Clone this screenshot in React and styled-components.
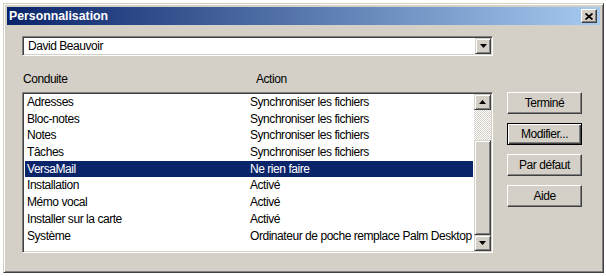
import React from "react";
import styled, { createGlobalStyle } from "styled-components";

const face = "#d4d0c8";

const GlobalStyle = createGlobalStyle`
  html, body {
    margin: 0;
    padding: 0;
    background: #fff;
  }
  body {
    font-family: "Liberation Sans", Arial, sans-serif;
    font-size: 12px;
    letter-spacing: -0.45px;
    color: #000;
  }
`;

const rows = [
  ["Adresses", "Synchroniser les fichiers"],
  ["Bloc-notes", "Synchroniser les fichiers"],
  ["Notes", "Synchroniser les fichiers"],
  ["Tâches", "Synchroniser les fichiers"],
  ["VersaMail", "Ne rien faire"],
  ["Installation", "Activé"],
  ["Mémo vocal", "Activé"],
  ["Installer sur la carte", "Activé"],
  ["Système", "Ordinateur de poche remplace Palm Desktop"],
];

const buttons = ["Terminé", "Modifier...", "Par défaut", "Aide"];

const Arrow = ({ up }) => (
  <svg width="7" height="4" viewBox="0 0 7 4">
    <path d={up ? "M3.5 0 L7 4 L0 4 Z" : "M0 0 L7 0 L3.5 4 Z"} fill="#000" />
  </svg>
);

const App = () => {
  return (
    <>
      <GlobalStyle />
      <Window>
        <TitleBar>
          <Title>Personnalisation</Title>
          <CloseButton>
            <svg width="8" height="7" viewBox="0 0 8 7">
              <path d="M0.5 0.5 L7.5 6.5 M7.5 0.5 L0.5 6.5" stroke="#000" strokeWidth="1.8" />
            </svg>
          </CloseButton>
        </TitleBar>
        <Body>
          <Combo>
            <ComboText>David Beauvoir</ComboText>
            <ScrollButton>
              <Arrow />
            </ScrollButton>
          </Combo>
          <Header>
            <span>Conduite</span>
            <span>Action</span>
          </Header>
          <Main>
            <List>
              <Rows>
                {rows.map(([name, action]) => (
                  <Row key={name} $selected={name === "VersaMail"}>
                    <Cell>{name}</Cell>
                    <Cell>{action}</Cell>
                  </Row>
                ))}
              </Rows>
              <ScrollBar>
                <ScrollButton $w={17}>
                  <Arrow up />
                </ScrollButton>
                <Track />
                <Thumb />
                <ScrollButton $w={17}>
                  <Arrow />
                </ScrollButton>
              </ScrollBar>
            </List>
            <Buttons>
              {buttons.map((label) => (
                <Button key={label} $default={label === "Modifier..."}>
                  {label}
                </Button>
              ))}
            </Buttons>
          </Main>
        </Body>
      </Window>
    </>
  );
};

export default App;

/* Styled Components */
const Window = styled.div`
  box-sizing: border-box;
  margin: 3px 0 0 3px;
  width: 601px;
  height: 270px;
  background: ${face};
  border: 1px solid;
  border-color: ${face} #404040 #404040 ${face};
  box-shadow: inset 1px 1px #fff, inset -1px -1px #808080;
  padding: 3px;
  display: flex;
  flex-direction: column;
`;

const TitleBar = styled.div`
  height: 18px;
  display: flex;
  align-items: center;
  justify-content: space-between;
  padding: 0 3px 0 2px;
  background: linear-gradient(to right, #0a246a, #a6caf0);
`;

const Title = styled.span`
  color: #fff;
  font-weight: bold;
  font-size: 12.3px;
  letter-spacing: 0;
`;

const CloseButton = styled.div`
  box-sizing: border-box;
  width: 16px;
  height: 14px;
  display: flex;
  align-items: center;
  justify-content: center;
  background: ${face};
  border: 1px solid;
  border-color: #fff #404040 #404040 #fff;
  box-shadow: inset -1px -1px #808080;
`;

const Body = styled.div`
  padding: 11px 0 0 15px;
`;

const Combo = styled.div`
  box-sizing: border-box;
  width: 471px;
  height: 20px;
  display: flex;
  align-items: center;
  padding: 1px;
  background: #fff;
  border: 1px solid;
  border-color: #808080 #fff #fff #808080;
  box-shadow: inset 1px 1px #404040, inset -1px -1px ${face};
`;

const ComboText = styled.span`
  flex: 1;
  padding-left: 4px;
`;

const Header = styled.div`
  display: grid;
  grid-template-columns: 233px auto;
  margin-top: 16px;
  height: 14px;
  line-height: 14px;
  padding-left: 1px;
`;

const Main = styled.div`
  display: flex;
  margin-top: 6px;
`;

const List = styled.div`
  box-sizing: border-box;
  width: 471px;
  height: 161px;
  display: flex;
  padding: 1px;
  background: #fff;
  border: 1px solid;
  border-color: #808080 #fff #fff #808080;
  box-shadow: inset 1px 1px #404040, inset -1px -1px ${face};
`;

const Rows = styled.div`
  flex: 1;
  padding: 0 1px;
  overflow: hidden;
`;

const Row = styled.div`
  display: grid;
  grid-template-columns: 223px 1fr;
  height: 16.7px;
  line-height: 16.7px;
  background: ${(p) => (p.$selected ? "#0a246a" : "transparent")};
  color: ${(p) => (p.$selected ? "#fff" : "#000")};
`;

const Cell = styled.span`
  padding-left: 2px;
  white-space: nowrap;
`;

const ScrollBar = styled.div`
  width: 17px;
  display: flex;
  flex-direction: column;
`;

const ScrollButton = styled.div`
  box-sizing: border-box;
  width: ${(p) => p.$w || 16}px;
  height: 16px;
  flex-shrink: 0;
  display: flex;
  align-items: center;
  justify-content: center;
  background: ${face};
  border: 1px solid;
  border-color: ${face} #404040 #404040 ${face};
  box-shadow: inset 1px 1px #fff, inset -1px -1px #808080;
`;

const Track = styled.div`
  height: 30px;
  background: repeating-conic-gradient(#fff 0 25%, ${face} 0 50%) 0 0 / 2px 2px;
`;

const Thumb = styled.div`
  flex: 1;
  box-sizing: border-box;
  background: ${face};
  border: 1px solid;
  border-color: ${face} #404040 #404040 ${face};
  box-shadow: inset 1px 1px #fff, inset -1px -1px #808080;
`;

const Buttons = styled.div`
  display: flex;
  flex-direction: column;
  gap: 9px;
  margin-left: 14px;
`;

const Button = styled.button`
  box-sizing: border-box;
  width: 75px;
  height: 22px;
  padding: 0;
  font-family: inherit;
  font-size: 12px;
  letter-spacing: -0.45px;
  color: #000;
  background: ${face};
  border: 1px solid;
  border-color: ${(p) => (p.$default ? "#000" : "#fff #404040 #404040 #fff")};
  box-shadow: ${(p) =>
    p.$default
      ? "inset 1px 1px #fff, inset -1px -1px #404040, inset -2px -2px #808080"
      : "inset -1px -1px #808080"};
`;
